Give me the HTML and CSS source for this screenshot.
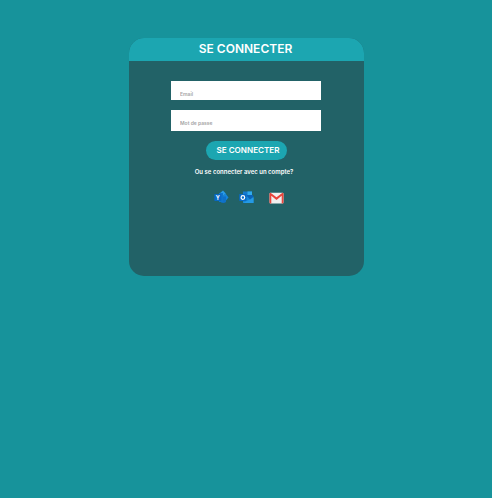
FILE: index.html
```html
<!DOCTYPE html>
<html lang="fr">
<head>
<meta charset="utf-8">
<title>Se connecter</title>
<link rel="stylesheet" href="styles.css">
</head>
<body>
<main class="card">
  <h1 class="card-header">SE CONNECTER</h1>
  <form class="form">
    <input class="field" type="email" placeholder="Email" aria-label="Email">
    <input class="field field-password" type="password" placeholder="Mot de passe" aria-label="Mot de passe">
    <button class="submit" type="button">SE CONNECTER</button>
    <p class="alternative">Ou se connecter avec un compte?</p>
    <div class="providers">
      <svg class="yammer" viewBox="0 0 15 14">
        <path d="M9 0.5L11.8 3.5 8 7 5.5 3.5Z" fill="#2a9be8"/>
        <path d="M11.5 3.5L14.5 7.5 11.5 11 8 7Z" fill="#1585dc"/>
        <path d="M7 6.5H12V12Q10 13.5 7 12.5Z" fill="#0f70c8"/>
        <path d="M5 3H9V12H5Z" fill="#0f75cc"/>
        <rect x="0.3" y="4" width="7" height="7" rx=".7" fill="#0869c4"/>
        <text x="3.8" y="9.5" text-anchor="middle">Y</text>
      </svg>
      <svg class="outlook" viewBox="0 0 15 13">
        <path d="M4 .5H13V8H4Z" fill="#1479cf"/>
        <path d="M8.5 .5H13V4H8.5Z" fill="#30aaee"/>
        <path d="M4 6L14.5 5.5V12H4Z" fill="#1386d9"/>
        <path d="M4 12L14.5 6.5V12Z" fill="#2599e4"/>
        <path d="M8 5L11 8.5 14 6V4H8Z" fill="#0b62b6"/>
        <rect x=".2" y="3" width="7.3" height="7" rx=".7" fill="#0869c4"/>
        <circle cx="3.9" cy="6.5" r="1.8" fill="none" stroke="#fff" stroke-width="1.2"/>
      </svg>
      <svg class="gmail" viewBox="0 0 15 12">
        <rect x=".5" y=".7" width="14" height="10.8" rx="1" fill="#f1efef"/>
        <path d="M.5 1.5Q.5 .7 1.5 .7L7.5 5.3 13.5 .7Q14.5 .7 14.5 1.5V10.5Q14.5 11.5 13.5 11.5H12.7V3.8L7.5 7.9 2.3 3.8V11.5H1.5Q.5 11.5 .5 10.5Z" fill="#e8453c"/>
      </svg>
    </div>
  </form>
</main>
</body>
</html>
```

FILE: styles.css
```css
* {
  box-sizing: border-box;
}

body {
  margin: 0;
  min-height: 100vh;
  padding: 38px 128px 0 129px;
  background: #17939b;
  font-family: Inter, sans-serif;
  color: #fff;
}

.card {
  width: 235px;
  height: 237.5px;
  border-radius: 15px;
  overflow: hidden;
  background: #226267;
}

.card-header {
  margin: 0;
  height: 23px;
  padding-right: 2px;
  background: #1ca6b1;
  font-size: 12px;
  font-weight: 600;
  line-height: 22px;
  text-align: center;
}

.form {
  display: flex;
  flex-direction: column;
  align-items: center;
  padding-top: 20px;
}

.field {
  width: 150px;
  height: 19px;
  margin: 0 1px 10px 0;
  padding: 7px 9px 0;
  border: 0;
  border-radius: 0;
  background: #fff;
  font: 600 5px/12px Inter, sans-serif;
}

.field::placeholder {
  color: #a5a5a5;
  opacity: 1;
}

.field-password {
  height: 21px;
  padding: 6px 9px 2px;
}

.submit {
  width: 81px;
  height: 19px;
  padding: 0 0 1px 3px;
  border: 0;
  border-radius: 10px;
  background: #1ca6b1;
  color: #fff;
  font: 600 8.1px/18px Inter, sans-serif;
  white-space: nowrap;
}

.alternative {
  margin: 7px 5px 0 0;
  font-size: 6px;
  font-weight: 600;
  line-height: 10px;
}

.providers {
  display: flex;
  align-items: flex-end;
  margin: 12.5px 0 0 4px;
}

.yammer {
  width: 15px;
  height: 14px;
  margin-right: 10px;
}

.yammer text {
  fill: #fff;
  font: 700 5.5px Inter, sans-serif;
}

.outlook {
  width: 15px;
  height: 13px;
  margin-right: 15px;
}

.gmail {
  width: 15px;
  height: 12px;
}
```
